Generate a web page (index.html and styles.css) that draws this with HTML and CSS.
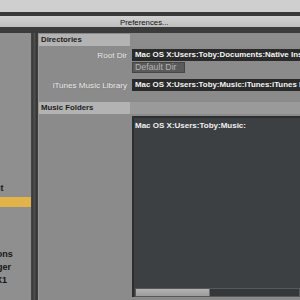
FILE: index.html
```html
<!DOCTYPE html>
<html lang="en">
<head>
    <meta charset="UTF-8">
    <title>Preferences...</title>
    <link rel="stylesheet" href="styles.css">
</head>
<body>

<div class="screen-top"></div>

<div class="titlebar">Preferences...</div>

<div class="window">
    <!-- Category list (its left part runs off the screen) -->
    <div class="sidebar">
        <ul class="categories">
            <li>Audio Setup</li>
            <li>Output Routing</li>
            <li>Input Routing</li>
            <li>MIDI Clock</li>
            <li>Loading</li>
            <li>Timecode Setup.</li>
            <li>Transport</li>
            <li>Decks Layout</li>
            <li>Track Decks</li>
            <li>Mixer</li>
            <li>Global Settings</li>
            <li>Effects</li>
            <li>Controller Layout</li>
            <li class="active">File Manage</li>
            <li>Recording</li>
            <li>Broadcasting</li>
            <li>Browser Details</li>
            <li>All Analyze Options</li>
            <li>Controller Manager</li>
            <li>Traktor Kontrol X1</li>
        </ul>
    </div>

    <div class="divider"></div>

    <!-- Settings pane -->
    <div class="pane">
        <div class="section-head">
            <div class="section-title">Directories</div>
            <div class="section-rest"></div>
        </div>

        <div class="row">
            <div class="label">Root Dir</div>
            <div class="field">Mac OS X:Users:Toby:Documents:Native Instruments:</div>
        </div>
        <div class="row row-button">
            <div class="label"></div>
            <div class="button">Default Dir</div>
        </div>
        <div class="row row-itunes">
            <div class="label">iTunes Music Library</div>
            <div class="field">Mac OS X:Users:Toby:Music:iTunes:iTunes Music Library.xml</div>
        </div>

        <div class="section-head section-music">
            <div class="section-title">Music Folders</div>
            <div class="section-rest"></div>
        </div>

        <div class="folders">
            <div class="folder-list">
                <div class="folder">Mac OS X:Users:Toby:Music:</div>
            </div>
            <div class="scrollbar">
                <div class="thumb"></div>
            </div>
        </div>
    </div>
</div>

</body>
</html>
```

FILE: styles.css
```css
/* Basic Reset */
* {
    margin: 0;
    padding: 0;
    box-sizing: border-box;
}
html, body {
    height: 100%;
    overflow: hidden;
}
body {
    font-family: "Liberation Sans", Arial, sans-serif;
    background: #8b8b8b;
    display: flex;
    flex-direction: column;
}
/* Top of the screen and title bar */
.screen-top {
    flex-shrink: 0;
    height: 16px;
    background: #cfcfcf;
    border-bottom: 4px solid #3a3a3a;
}
.titlebar {
    flex-shrink: 0;
    height: 17px;
    padding-left: 120px;
    padding-top: 2px;
    background: linear-gradient(#d2d2d2, #bebebe);
    border-bottom: 6px solid #3b3b3b;
    font-size: 7.8px;
    line-height: 9px;
    color: #111;
}
/* Window body */
.window {
    flex: 1;
    display: flex;
    min-height: 0;
}
.sidebar {
    width: 31px;
    background: #8f8f8f;
    overflow: hidden;
}
.categories {
    list-style: none;
    margin-left: -71.5px;
    margin-top: -9.2px;
    width: 110px;
}
.categories li {
    height: 13.2px;
    line-height: 13.2px;
    font-size: 9px;
    font-weight: bold;
    color: #161616;
    white-space: nowrap;
}
.categories li.active {
    background: linear-gradient(transparent 1.8px, #e1b349 1.8px, #e1b349 11.8px, transparent 11.8px);
}
.divider {
    width: 7px;
    background: linear-gradient(90deg, #474747 0, #3a3a3a 2px, #4f4f4f 3px, #4f4f4f 4px, #363636 5px, #3f3f3f 7px);
}
/* Settings pane */
.pane {
    flex: 1;
    padding-top: 1px;
    display: flex;
    flex-direction: column;
    min-width: 0;
    border-left: 1px solid #9a9a9a;
}
.section-head {
    display: flex;
    flex-shrink: 0;
    height: 12px;
}
.section-title {
    width: 91px;
    background: #b3b3b3;
    font-size: 7.8px;
    font-weight: bold;
    line-height: 12px;
    color: #1c1c1c;
    padding-left: 2px;
}
.section-rest {
    flex: 1;
    background: #8d8d8d;
}
.section-music {
    margin-top: 11px;
}
.section-music .section-rest {
    background: #9a9a9a;
}
.row {
    display: flex;
    flex-shrink: 0;
    align-items: center;
    height: 12px;
    margin-top: 3px;
}
.row-button {
    margin-top: 1px;
    height: 11px;
}
.row-itunes {
    margin-top: 6px;
}
.label {
    width: 88px;
    text-align: right;
    font-size: 8.1px;
    color: #ededed;
    white-space: nowrap;
    text-shadow: 0 0 1px #6e6e6e;
    flex-shrink: 0;
}
.field {
    margin-left: 5px;
    flex: 1;
    height: 12px;
    background: #2a2a2a;
    color: #f4f4f4;
    font-size: 7.9px;
    font-weight: bold;
    line-height: 12px;
    padding-left: 3px;
    white-space: nowrap;
    overflow: hidden;
}
.button {
    margin-left: 5px;
    width: 53px;
    height: 11px;
    background: #5a5a5a;
    border: 1px solid #464646;
    color: #b3b3b3;
    font-size: 8.8px;
    line-height: 9px;
    padding-left: 2px;
    white-space: nowrap;
}
/* Music folders list */
.folders {
    flex: 1;
    min-height: 0;
    margin: 2px 0 3px 93px;
    display: flex;
    flex-direction: column;
    background: #3c4043;
    border-top: 2px solid #2c2e30;
    border-left: 2px solid #2c2e30;
}
.folder-list {
    flex: 1;
    padding: 3px 0 0 1px;
}
.folder {
    font-size: 8px;
    font-weight: bold;
    color: #f0f0f0;
    white-space: nowrap;
}
.scrollbar {
    height: 9px;
    margin-left: 1px;
    background: #35383b;
    border: 1px solid #56595c;
    display: flex;
}
.thumb {
    width: 74px;
    background: linear-gradient(#b3b3b3, #9c9c9c);
    border-right: 1px solid #6e6e6e;
}
```
